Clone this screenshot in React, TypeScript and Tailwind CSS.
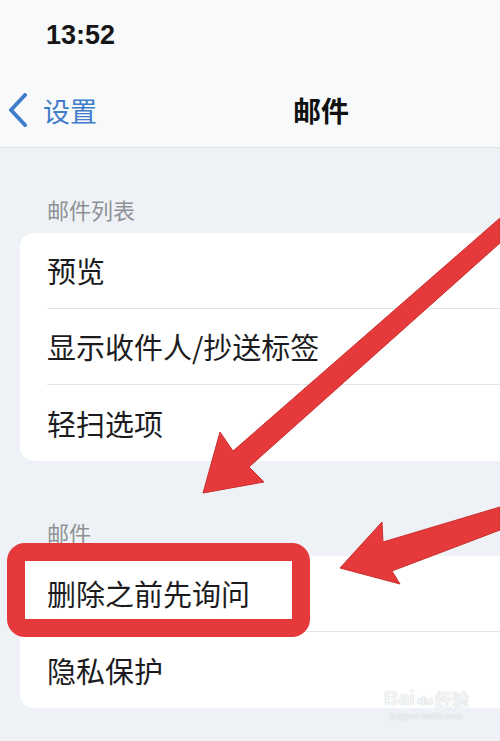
import React from 'react';

const cjk = { fontFamily: '"Noto Sans CJK SC", "Noto Sans", sans-serif' };
const latin = { fontFamily: '"Liberation Sans", Arial, sans-serif' };

const Row: React.FC<{ label: string; last?: boolean }> = ({ label, last }) => (
  <div className="pl-[27px]">
    <div className={`h-[76px] flex items-center ${last ? '' : 'border-b border-[#e2e3e7]'}`}>
      <span className="text-[29px] leading-[29px] text-[#1c1c1e]">{label}</span>
    </div>
  </div>
);

const Section: React.FC<{ title: string; rows: string[]; className?: string }> = ({ title, rows, className }) => (
  <div className={className}>
    <div className="pl-[47px] text-[22px] leading-[22px] text-[#8f9196]">{title}</div>
    <div className="mt-[13px] ml-[20px] bg-white rounded-l-[14px]">
      {rows.map((r, i) => (
        <Row key={r} label={r} last={i === rows.length - 1} />
      ))}
    </div>
  </div>
);

export default function App() {
  return (
    <div className="relative w-[500px] h-[741px] overflow-hidden bg-[#eef1f5]" style={cjk}>
      {/* status bar + nav */}
      <div className="bg-[#f7f9fb] border-b border-[#dcdfe4]">
        <div className="h-[73px] pt-[22px] pl-[46px]">
          <span className="text-[27px] leading-[27px] font-bold text-[#161616]" style={latin}>
            13:52
          </span>
        </div>
        <div className="relative h-[74px] flex items-center">
          <div className="flex items-center pl-[8px] gap-[15px]">
            <svg width="20" height="34" viewBox="0 0 20 34" fill="none">
              <path d="M17 2 L3 17 L17 32" stroke="#3f7cca" strokeWidth="4" strokeLinecap="round" strokeLinejoin="round" />
            </svg>
            <span className="text-[27px] leading-[27px] text-[#3f7cca]">设置</span>
          </div>
          <div className="absolute left-[293px] text-[28px] leading-[28px] font-bold text-[#111]">邮件</div>
        </div>
      </div>

      <Section title="邮件列表" rows={['预览', '显示收件人/抄送标签', '轻扫选项']} className="pt-[50px]" />
      <Section title="邮件" rows={['删除之前先询问', '隐私保护']} className="pt-[60px]" />

      {/* red annotation box */}
      <div className="absolute left-[7px] top-[543px] w-[303px] h-[94px] border-[18px] border-[#e6393b] rounded-[18px]" />

      {/* red arrows */}
      <svg className="absolute left-0 top-0" width="500" height="741" viewBox="0 0 500 741">
        <polygon
          points="203,493 220,432 233,451 500,218 500,243 249,467 264,482"
          fill="#e6393b"
          stroke="#c9302f"
          strokeWidth="1"
          strokeLinejoin="round"
        />
        <polygon
          points="340,568 382,522 383,542 500,507 500,530 392,571 400,584"
          fill="#e6393b"
          stroke="#c9302f"
          strokeWidth="1"
          strokeLinejoin="round"
        />
      </svg>

      {/* watermark */}
      <div className="absolute left-[384px] top-[686px] flex flex-col items-center text-[#f4f5f7] [text-shadow:0_0_1px_#b9bcc2]">
        <div className="flex items-end gap-[2px] h-[22px]">
          <span className="text-[20px] leading-[20px] font-bold" style={latin}>Bai</span>
          <span className="text-[13px] leading-[14px] font-bold" style={latin}>du</span>
          <span className="text-[17px] leading-[18px] font-bold">经验</span>
        </div>
        <span className="mt-[3px] text-[9px] leading-[10px]" style={latin}>jingyan.baidu.com</span>
      </div>
    </div>
  );
}
